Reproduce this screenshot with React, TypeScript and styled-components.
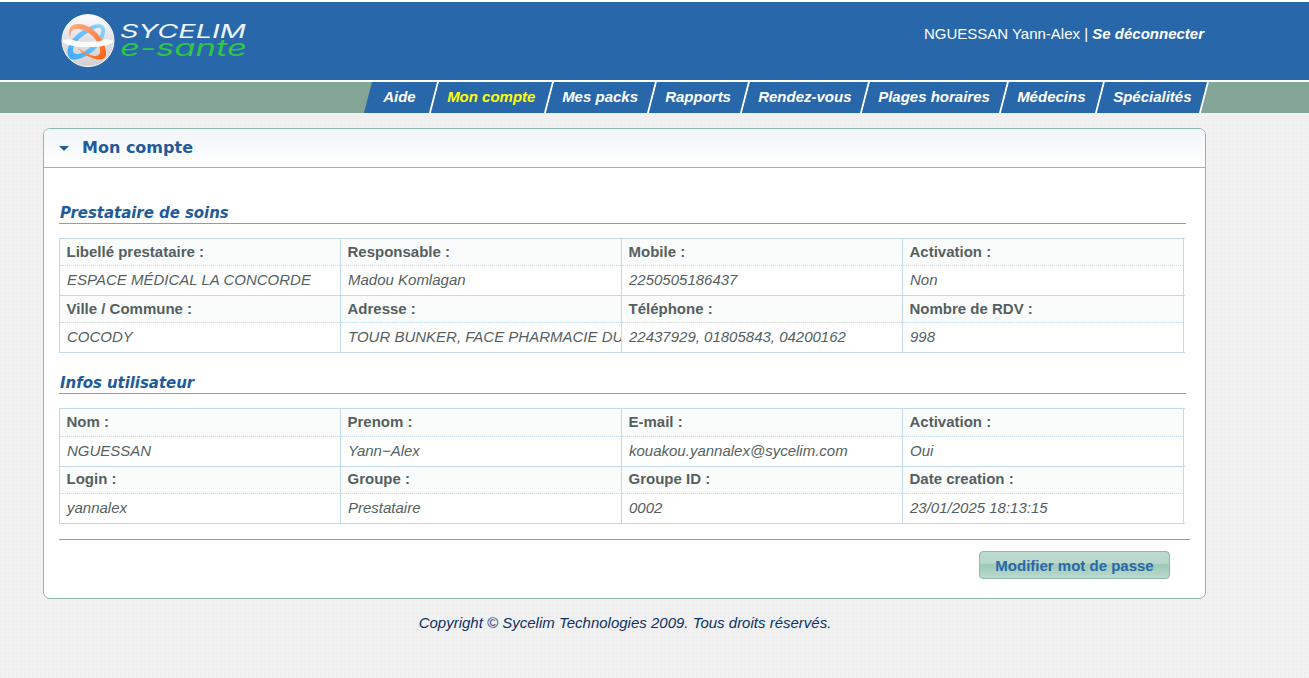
import React from 'react';
import styled, { createGlobalStyle } from 'styled-components';

const GlobalStyle = createGlobalStyle`
  * { box-sizing: border-box; }
  body {
    margin: 0;
    min-height: 678px;
    overflow: hidden;
    font: 15px/18px "Liberation Sans", Arial, sans-serif;
    color: #555f5f;
    background-color: #f1f1f1;
    background-image: radial-gradient(circle at 1px 1px, #eeeeee 1px, transparent 1.4px);
    background-size: 4px 4px;
  }
`;

const Header = styled.header`
  height: 82px;
  border-top: 2px solid #fff;
  border-bottom: 2px solid #fff;
  background: #2867aa;
`;

const HeaderInner = styled.div`
  width: 1163px;
  margin-left: 43px;
  height: 78px;
  display: flex;
  justify-content: space-between;
  align-items: flex-start;
  padding: 7px 2px 0 13px;
`;

const Session = styled.div`
  margin-top: 16px;
  color: #fff;
  white-space: nowrap;
`;

const Logout = styled.a`
  font-weight: bold;
  font-style: italic;
`;

const Nav = styled.nav`
  height: 31px;
  background: #84a595;
  display: flex;
  padding-left: 368px;
`;

const Tab = styled.a<{ $width: number; $active?: boolean; $first?: boolean }>`
  width: ${(p) => p.$width}px;
  flex: none;
  height: 31px;
  padding: 6px 0 0 ${(p) => (p.$first ? 15 : 12)}px;
  background: #2867aa;
  border-right: 2px solid #fff;
  transform: skewX(-14.5deg);
  color: ${(p) => (p.$active ? '#ffff00' : '#fff')};
  font-weight: bold;
  white-space: nowrap;
`;

const TabLabel = styled.span`
  display: inline-block;
  font-style: italic;
  transform: skewX(14.5deg);
`;

const Panel = styled.section`
  width: 1163px;
  height: 471px;
  margin: 15px 0 0 43px;
  border: 1px solid #8fb8a8;
  border-radius: 7px;
  background: #fff;
  overflow: hidden;
`;

const PanelHeader = styled.div`
  height: 39px;
  display: flex;
  align-items: center;
  padding: 0 0 0 15px;
  gap: 14px;
  border-bottom: 1px solid #8fb8a8;
  background: linear-gradient(#f2f6f8, #f8fafc 60%, #fbfdfc 70%, #fbfdfc);
`;

const Caret = styled.span`
  width: 0;
  height: 0;
  margin-top: 1px;
  border: 5px solid transparent;
  border-top: 5px solid #225b99;
  border-bottom: 0;
`;

const Title = styled.h1`
  margin: 0 0 0 -1px;
  font: bold 16px/20px "DejaVu Sans", Verdana, sans-serif;
  color: #225b99;
`;

const PanelBody = styled.div`
  padding: 34px 15px 0;
`;

const SectionTitle = styled.h2`
  width: 1127px;
  height: 22px;
  margin: 0 0 14px;
  padding-left: 1px;
  border-bottom: 1px solid #84a595;
  font: italic bold 15px/22px "DejaVu Sans", Verdana, sans-serif;
  letter-spacing: -0.05px;
  color: #225b99;
`;

const Table = styled.div<{ $gap: number }>`
  width: 1126px;
  margin-bottom: ${(p) => p.$gap}px;
  border-top: 1px solid #c1d9ea;
  border-left: 1px solid #c1d9ea;
`;

const Row = styled.div`
  display: grid;
  grid-template-columns: repeat(4, 281px);
  border-bottom: 1px solid #c1d9ea;
`;

const Cell = styled.div`
  border-right: 1px solid #c1d9ea;
  overflow: hidden;
  white-space: nowrap;
`;

const Label = styled.div<{ $height: number; $top: number }>`
  height: ${(p) => p.$height}px;
  padding: ${(p) => p.$top}px 0 0 6.5px;
  border-bottom: 1px dotted #c1d9ea;
  background: #fafcfc;
  font-weight: bold;
`;

const Value = styled.div`
  height: 29px;
  padding: 5px 0 0 7px;
  font-style: italic;
`;

const Actions = styled.div`
  width: 1131px;
  border-top: 1px solid #84a595;
  padding: 11px 20px 0 0;
  display: flex;
  justify-content: flex-end;
`;

const Button = styled.button`
  width: 191px;
  height: 28px;
  padding: 2px 0 0;
  border: 1px solid #8fb8a8;
  border-radius: 4px;
  background: linear-gradient(#bcdacf 0, #b8d7cb 44%, #9ecab8 46%, #a2ccbb 60%, #bcdacf 100%);
  color: #2867aa;
  font: bold 15px/18px "Liberation Sans", Arial, sans-serif;
`;

const Footer = styled.footer`
  width: 1163px;
  margin: 15px 0 0 43.5px;
  text-align: center;
  font-style: italic;
  color: #0b3263;
`;

function Logo() {
  return (
    <svg width="200" height="66" viewBox="56 9 200 66">
      <defs>
        <linearGradient id="ball" x1="0" y1="0" x2="0" y2="1">
          <stop offset="0" stopColor="#fff" />
          <stop offset=".45" stopColor="#e2e2e4" />
          <stop offset="1" stopColor="#d2d0d0" />
        </linearGradient>
        <linearGradient id="warm" x1="0" y1="0" x2="1" y2="1">
          <stop offset="0" stopColor="#ffad85" />
          <stop offset=".55" stopColor="#ff8a50" />
          <stop offset="1" stopColor="#ff5c0c" />
        </linearGradient>
        <linearGradient id="cool" x1="1" y1="0" x2="0" y2="1">
          <stop offset="0" stopColor="#8fd4ff" />
          <stop offset="1" stopColor="#3aa9ff" />
        </linearGradient>
      </defs>
      <circle cx="88" cy="41" r="26.7" fill="#39679d" />
      <circle cx="88" cy="40.6" r="26" fill="url(#ball)" stroke="#f3f5f8" />
      <g fillRule="evenodd">
        <path fill="url(#cool)" d="M69 57C64 48 73 35 87 28C97 22 106 23 105 32C104 44 89 57 78 59C74 60 70 60 69 57ZM74 53C79 58 98 44 101 33C103 26 97 27 91 31C79 37 70 47 74 53Z" />
        <path fill="url(#warm)" d="M70 37C67 29 71 23 80 24C95 26 107 42 106 55C105 61 96 60 90 57C85 55 80 51 78 48C85 53 97 60 100 53C102 44 90 30 79 29C73 28 71 31 70 37Z" />
      </g>
      <path d="M62 41Q66 38.5 71 39.5Q77 42 88 42Q99 42 105 39.5Q110 39 114 41Q109 47 88 47Q67 47 62 41Z" fill="#fff" />
      <g fontFamily="Inter, sans-serif" fontStyle="italic">
        <text x="120" y="38" fontSize="18" fill="#eef5ff" textLength="126" lengthAdjust="spacingAndGlyphs">SYCELIM</text>
        <text x="120" y="56" fontSize="22.5" fill="#2fc545" textLength="127" lengthAdjust="spacingAndGlyphs">e-sante</text>
      </g>
    </svg>
  );
}

const tabs = [
  { label: 'Aide', width: 67 },
  { label: 'Mon compte', width: 115 },
  { label: 'Mes packs', width: 103 },
  { label: 'Rapports', width: 93 },
  { label: 'Rendez-vous', width: 120 },
  { label: 'Plages horaires', width: 139 },
  { label: 'Médecins', width: 96 },
  { label: 'Spécialités', width: 104 },
];

const provider = [
  [
    ['Libellé prestataire :', 'ESPACE MÉDICAL LA CONCORDE'],
    ['Responsable :', 'Madou Komlagan'],
    ['Mobile :', '2250505186437'],
    ['Activation :', 'Non'],
  ],
  [
    ['Ville / Commune :', 'COCODY'],
    ['Adresse :', 'TOUR BUNKER, FACE PHARMACIE DU'],
    ['Téléphone :', '22437929, 01805843, 04200162'],
    ['Nombre de RDV :', '998'],
  ],
];

const user = [
  [
    ['Nom :', 'NGUESSAN'],
    ['Prenom :', 'Yann−Alex'],
    ['E-mail :', 'kouakou.yannalex@sycelim.com'],
    ['Activation :', 'Oui'],
  ],
  [
    ['Login :', 'yannalex'],
    ['Groupe :', 'Prestataire'],
    ['Groupe ID :', '0002'],
    ['Date creation :', '23/01/2025 18:13:15'],
  ],
];

interface InfoTableProps {
  rows: string[][][];
  heights: number[];
  tops: number[];
  gap: number;
}

function InfoTable({ rows, heights, tops, gap }: InfoTableProps) {
  return (
    <Table $gap={gap}>
      {rows.map((row, i) => (
        <Row key={i}>
          {row.map(([label, value]) => (
            <Cell key={label}>
              <Label $height={heights[i]} $top={tops[i]}>{label}</Label>
              <Value>{value}</Value>
            </Cell>
          ))}
        </Row>
      ))}
    </Table>
  );
}

export default function App() {
  return (
    <>
      <GlobalStyle />
      <Header>
        <HeaderInner>
          <Logo />
          <Session>
            NGUESSAN Yann-Alex | <Logout>Se déconnecter</Logout>
          </Session>
        </HeaderInner>
      </Header>
      <Nav>
        {tabs.map((t, i) => (
          <Tab key={t.label} $width={t.width} $first={i === 0} $active={i === 1}>
            <TabLabel>{t.label}</TabLabel>
          </Tab>
        ))}
      </Nav>
      <Panel>
        <PanelHeader>
          <Caret />
          <Title>Mon compte</Title>
        </PanelHeader>
        <PanelBody>
          <SectionTitle>Prestataire de soins</SectionTitle>
          <InfoTable rows={provider} heights={[27, 27]} tops={[4, 4]} gap={19} />
          <SectionTitle>Infos utilisateur</SectionTitle>
          <InfoTable rows={user} heights={[28, 27]} tops={[4, 3]} gap={15} />
          <Actions>
            <Button>Modifier mot de passe</Button>
          </Actions>
        </PanelBody>
      </Panel>
      <Footer>Copyright © Sycelim Technologies 2009. Tous droits réservés.</Footer>
    </>
  );
}
